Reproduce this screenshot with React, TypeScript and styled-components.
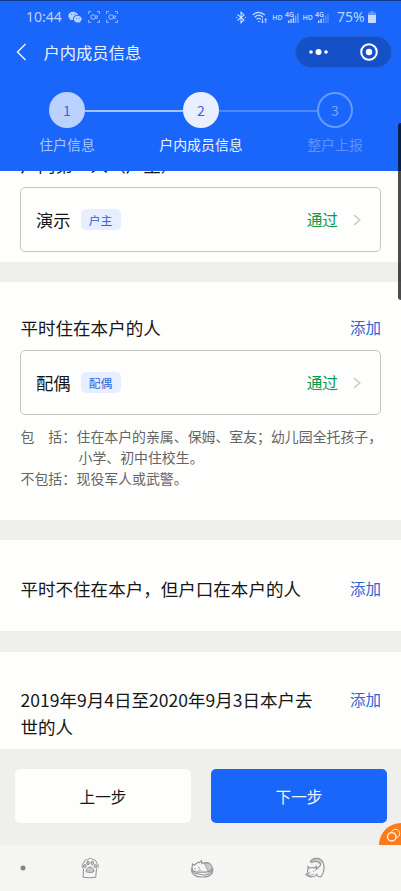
import React from "react";
import styled, { createGlobalStyle, css } from "styled-components";

const Global = createGlobalStyle`
  * { box-sizing: border-box; }
  body {
    margin: 0;
    font-family: "Noto Sans CJK SC", "Noto Sans", sans-serif;
    font-weight: 400;
    color: #161616;
    background: #fefefd;
  }
  button { font: inherit; border: 0; padding: 0; background: none; }
`;

const Screen = styled.div`
  position: relative;
  display: flex;
  flex-direction: column;
  width: 401px;
  height: 891px;
  overflow: hidden;
`;

const Header = styled.header`
  height: 171px;
  flex: none;
  background: #1b66fa;
  border-top: 1px solid #10388c;
  color: #e9f1ff;
`;

const StatusBar = styled.div`
  display: flex;
  justify-content: space-between;
  align-items: center;
  height: 32px;
  padding: 0 25px 0 26px;
  color: #b9d2ff;
  font-family: "Noto Sans", sans-serif;
`;

const StatusGroup = styled.div`
  display: flex;
  align-items: center;
`;

const StatusIcons = styled(StatusGroup)`
  gap: 6px;
`;

const Clock = styled.span`
  width: 36px;
  font-size: 14px;
  line-height: 20px;
`;

const Battery = styled.span`
  margin-left: 8px;
  width: 31px;
  font-size: 14px;
  line-height: 20px;
`;

const NavBar = styled.div`
  display: flex;
  align-items: center;
  height: 37px;
  padding: 1px 9px 0 15px;
  svg { flex: none; }
`;

const Title = styled.h1`
  flex: 1;
  margin: 0 0 0 15.500px;
  font-size: 16.3px;
  line-height: 24px;
  font-weight: 400;
`;

const Capsule = styled.div`
  display: flex;
  align-items: center;
  justify-content: space-between;
  width: 97px;
  height: 32px;
  padding: 0 13px 0 13px;
  border-radius: 16px;
  border: 1px solid #2460d2;
  background: #1450c8;
`;

const Steps = styled.div`
  display: grid;
  grid-template-columns: repeat(3, 134px);
  width: 402px;
  margin: 22px 0 0 0;
`;

type StepState = "done" | "active" | "todo";

const Step = styled.div<{ $state: StepState }>`
  display: grid;
  grid-template-columns: 1fr 36px 1fr;
  align-items: center;
  justify-items: center;
  color: ${(p) => (p.$state === "done" ? "#a6c6ff" : p.$state === "active" ? "#f0f5ff" : "#5b92fd")};
`;

const Link = styled.span<{ $tone: "none" | "strong" | "soft" }>`
  width: 100%;
  height: 2px;
  margin-top: 1px;
  background: ${(p) => (p.$tone === "none" ? "transparent" : p.$tone === "strong" ? "#a3c3ff" : "#4c87fc")};
`;

const Circle = styled.span<{ $state: StepState }>`
  display: flex;
  align-items: center;
  justify-content: center;
  width: 36px;
  height: 36px;
  border-radius: 50%;
  font-size: 14px;
  line-height: 20px;
  color: #2f68dc;
  ${(p) => p.$state === "done" && css`background: #bcd2fe;`}
  ${(p) => p.$state === "active" && css`background: #e8f0ff;`}
  ${(p) => p.$state === "todo" && css`border: 2px solid #659afe; color: #78a7fe;`}
`;

const StepLabel = styled.span`
  grid-column: 1 / -1;
  margin-top: 6px;
  font-size: 13.9px;
  line-height: 20px;
`;

const Content = styled.main`
  flex: 1;
  min-height: 0;
  overflow: hidden;
  background: #efefee;
`;

const Section = styled.section<{ $height: number; $top?: number; $pad?: number }>`
  height: ${(p) => p.$height}px;
  margin-top: ${(p) => p.$top ?? 20}px;
  padding: ${(p) => p.$pad ?? 32}px 20px 0 20.500px;
  background: #fefefd;
`;

const SectionHead = styled.div`
  display: flex;
  justify-content: space-between;
  align-items: flex-start;
  min-height: 27px;
`;

const Heading = styled.h2`
  width: 300px;
  margin: 0;
  font-size: 17.550px;
  line-height: 27px;
  font-weight: 400;
`;

const AddLink = styled.button`
  color: #2a66d4;
  font-size: 15.5px;
  line-height: 26px;
`;

const MemberCard = styled.div`
  display: flex;
  align-items: center;
  width: 361px;
  height: 65px;
  margin: 9px 0 0 -0.500px;
  padding: 1px 19px 0 15px;
  border: 1px solid #c6c6c6;
  border-radius: 5px;
`;

const Name = styled.span`
  font-size: 17.3px;
  line-height: 26px;
`;

const Role = styled.span`
  margin: -2px 0 0 10px;
  width: 40px;
  height: 21px;
  border-radius: 5px;
  text-align: center;
  background: #e7eeff;
  color: #2a66dc;
  font-size: 11.8px;
  line-height: 22px;
`;

const Passed = styled.span`
  margin: 0 15px 0 auto;
  color: #0c9a4c;
  font-size: 15.7px;
  line-height: 24px;
`;

const Hints = styled.dl`
  display: grid;
  grid-template-columns: 56px 1fr;
  margin: 11px -10px 0 0;
  color: #656565;
  font-size: 13.9px;
  line-height: 21px;
`;

const HintTerm = styled.dt`
  white-space: pre;
`;

const HintText = styled.dd`
  margin: 0;
  white-space: nowrap;
`;

const HintRest = styled.div`
  padding-left: 2px;
`;

const Footer = styled.footer`
  display: flex;
  gap: 20px;
  flex: none;
  height: 96px;
  padding: 20px 14px 0 15px;
  background: #efefee;
`;

const StepButton = styled.button<{ $primary?: boolean }>`
  flex: 1;
  height: 54px;
  border-radius: 5px;
  font-size: 15.6px;
  line-height: 24px;
  background: ${(p) => (p.$primary ? "#1b66fa" : "#fefefd")};
  color: ${(p) => (p.$primary ? "#f2f7ff" : "#161616")};
`;

const SystemNav = styled.nav`
  display: flex;
  align-items: center;
  flex: none;
  height: 46px;
  padding: 0 76px 0 20px;
  background: #f5f5f4;
`;

const NavIcons = styled.div`
  display: flex;
  flex: 1;
  justify-content: space-between;
  margin-left: 55px;
`;

const EdgeHandle = styled.div`
  position: absolute;
  top: 123px;
  right: 0;
  width: 3px;
  height: 177px;
  border-radius: 3px 0 0 3px;
  background: rgba(0, 0, 0, 0.7);
`;

const FloatingBubble = styled.div`
  position: absolute;
  top: 822px;
  right: 0;
  width: 22px;
  height: 23px;
  overflow: hidden;
  svg { display: block; }
`;

const WeChat = () => (
  <svg width="14" height="13" viewBox="0 0 14 13" fill="#b9d2ff">
    <path d="M5.4.7C2.4.7.3 2.5.3 4.8c0 1.3.7 2.4 1.8 3.2l-.4 1.6 1.8-.9 1.4.3C4.600 5.900 6.600 4 10 4 9.500 2 7.600.7 5.400.7Z" />
    <path d="M13.700 8.100c0-1.900-1.800-3.400-4-3.400s-4 1.500-4 3.400 1.800 3.400 4 3.400l1.200-.2 1.500.8-.4-1.300c1-.6 1.700-1.600 1.700-2.700Z" />
    <g fill="#1b66fa"><circle cx="3.700" cy="3.500" r=".6" /><circle cx="7" cy="3.500" r=".6" /><circle cx="8.400" cy="7.300" r=".5" /><circle cx="11" cy="7.300" r=".5" /></g>
  </svg>
);

const Capture = () => (
  <svg width="12" height="12" viewBox="0 0 12 12" fill="none" stroke="#a6c5ff" strokeWidth=".9">
    <path d="M.6 3V.6H3M9 .6h2.400V3M11.400 9v2.400H9M3 11.400H.6V9" />
    <rect x="3" y="4" width="4.200" height="4" rx=".8" />
    <path d="m7.200 5.600 2-1v3l-2-1" />
  </svg>
);

const Bluetooth = () => (
  <svg width="12" height="13" viewBox="0 0 12 13" fill="none" stroke="#c6daff" strokeWidth="1.100">
    <path d="m2.500 3.500 6.500 5.500-3 2.700V1.200l3 2.700L2.500 9.500M1 6.500h1.200M9.800 6.500H11" />
  </svg>
);

const Wifi = () => (
  <svg width="16" height="13" viewBox="0 0 16 13" fill="none" stroke="#c6daff" strokeWidth="1.200">
    <path d="M.8 4C4.300.4 9.200.4 12.800 4M2.700 6.200c2.600-2.500 5.600-2.500 8.200 0M4.600 8.400c1.500-1.400 3-1.400 4.400 0" />
    <circle cx="6.800" cy="10.500" r=".8" fill="#c6daff" stroke="none" />
    <path d="M10.500 7.500v4.300m-1.300-1.300 1.300 1.400 1.300-1.400M13.700 12V7.700m-1.300 1.400 1.300-1.400L15 9.100" strokeWidth=".9" />
  </svg>
);

const SignalBox = styled.span`
  display: flex;
  align-items: center;
  gap: 2px;
  font-size: 7px;
  font-weight: 600;
  margin-left: 4px;
`;

const Signal = ({ weak }: { weak?: boolean }) => (
  <SignalBox>
    HD
    <svg width="14" height="13" viewBox="0 0 14 13" fill="#c6daff">
      <text x="0" y="6" fontSize="7" fontWeight="600" fontFamily="Noto Sans">4G</text>
      <path d="M3 9.500h1.400V12H3ZM5.400 8h1.400v4H5.400Z" />
      <path d="M7.800 6.500h1.400V12H7.800Z" opacity={weak ? 0.5 : 1} />
      <path d="M10 4.500h1.400V12H10ZM12.300 2.500h1.400V12h-1.400Z" opacity={weak ? 0.3 : 0.55} />
    </svg>
  </SignalBox>
);

const BatteryIcon = () => (
  <svg width="8" height="12" viewBox="0 0 8 12">
    <path d="M2.500 0h3v1.500H8V12H0V1.500h2.500Z" fill="#6597fb" />
    <path d="M0 4h8v7q0 1-1 1H1q-1 0-1-1Z" fill="#c6daff" />
  </svg>
);

const Chevron = () => (
  <svg width="8" height="12" viewBox="0 0 8 12" fill="none" stroke="#c8c8c8" strokeWidth="1.500">
    <path d="m1 1 5.700 5L1 11" />
  </svg>
);

const Paw = () => (
  <svg width="18" height="22" viewBox="0 0 18 22" fill="none" stroke="#929292" strokeWidth="1">
    <path d="M2 20.300 2.500 12C.6 10.500.7 6.500 3 5.800 3 3 5.500 2.200 6.500 3c1-2.200 4.600-2.200 5.500 0 1.500-.8 3.500.3 3.500 3 2.300 1 2.200 4.800 0 6l-.8 8.300Q9 21.300 2 20.300Z" />
    <g fill="#c9c9c9">
      <ellipse cx="3.800" cy="9" rx="1.300" ry="1.600" /><ellipse cx="7" cy="6" rx="1.300" ry="1.700" /><ellipse cx="11.300" cy="6" rx="1.300" ry="1.700" /><ellipse cx="14.400" cy="9" rx="1.300" ry="1.600" />
      <path d="M9 10c-2 0-4 2.500-4 4s2.500 1.400 4 1.400 4 .1 4-1.400-2-4-4-4Z" />
    </g>
  </svg>
);

const SleepingCat = () => (
  <svg width="24" height="22" viewBox="0 0 24 22" fill="none" stroke="#929292" strokeWidth="1.100">
    <path d="M2 11c-2 7 4.500 9.500 11 9 7-.2 11-3.500 9.500-9" />
    <path d="M2 14c3 4 6 2.500 9 3.500 4 1.200 10 0 11-5" />
    <path d="M2 11 2.500 7l2 1.200C6 6 8 6.200 8.500 5l1 .6 2-2 .5 3c4-2.200 8.500-1 10 3 1 3-2 5.500-6 5.500H7.500C4 15 2 14 2 11Z" />
    <path d="m14 6.200 4 7.800q5-1 4-4.500-1.500-4-8-3.300Z" fill="#c9c9c9" strokeWidth=".7" />
    <path d="m4 11.500 2 .8m2-2 2 .6M8 14l2-1.500 1.500 1.500" strokeWidth=".8" />
  </svg>
);

const StretchingCat = () => (
  <svg width="20" height="22" viewBox="0 0 20 22" fill="none" stroke="#929292" strokeWidth="1.100">
    <path d="M5.200 4.500C8 .5 14 .2 17 3.500c3.200 4.500 2.400 11-.3 15.500-2 1.800-5 .2-5-1.500-2 3-7 2.800-9 1.200-1.500-.2-2-.7-1.900-1.600l2.500-.5C2 15 2.500 13 3 12.500L3 9.500l2 1.500c2-.8 3-.6 4 0l2.400-1.700-.3 3.200c1.300-1.500 3.600-2.800 4.600-4.500-1-3.500-5-4.500-9.300-2.500Z" />
    <path d="M5.500 4.600C9 .5 15 1 17 4l-1.500 3C14 3.500 9 3.500 6.500 5.300Z" fill="#c9c9c9" strokeWidth=".6" />
    <path d="m4 15 1.500.5M8 14.500l1.500-.5M2 18h5l2-1" strokeWidth=".8" />
  </svg>
);

type Tone = "none" | "strong" | "soft";

const steps: { label: string; state: StepState; left: Tone; right: Tone }[] = [
  { label: "住户信息", state: "done", left: "none", right: "strong" },
  { label: "户内成员信息", state: "active", left: "strong", right: "soft" },
  { label: "整户上报", state: "todo", left: "soft", right: "none" },
];

const Member = ({ name, role }: { name: string; role: string }) => (
  <MemberCard>
    <Name>{name}</Name>
    <Role>{role}</Role>
    <Passed>通过</Passed>
    <Chevron />
  </MemberCard>
);

const Radios = styled(StatusGroup)`
  gap: 5px;
`;

export default function App() {
  return (
    <Screen>
      <Global />
      <Header>
        <StatusBar>
          <StatusIcons>
            <Clock>10:44</Clock>
            <WeChat />
            <Capture />
            <Capture />
          </StatusIcons>
          <StatusGroup>
            <Radios>
              <Bluetooth />
              <Wifi />
            </Radios>
            <Signal />
            <Signal weak />
            <Battery>75%</Battery>
            <BatteryIcon />
          </StatusGroup>
        </StatusBar>
        <NavBar>
          <svg width="13" height="18" viewBox="0 0 13 18" fill="none" stroke="#e9f1ff" strokeWidth="1.500">
            <path d="M10.500 1 2.500 9l8 8" />
          </svg>
          <Title>户内成员信息</Title>
          <Capsule>
            <svg width="19" height="8" viewBox="0 0 19 8" fill="#fff">
              <circle cx="2" cy="4" r="1.800" /><circle cx="9.500" cy="4" r="3" /><circle cx="17" cy="4" r="1.800" />
            </svg>
            <svg width="18" height="18" viewBox="0 0 18 18" fill="none">
              <circle cx="9" cy="9" r="7.800" stroke="#fff" strokeWidth="2" /><circle cx="9" cy="9" r="3.200" fill="#fff" />
            </svg>
          </Capsule>
        </NavBar>
        <Steps>
          {steps.map((s, i) => (
            <Step key={s.label} $state={s.state}>
              <Link $tone={s.left} />
              <Circle $state={s.state}>{i + 1}</Circle>
              <Link $tone={s.right} />
              <StepLabel>{s.label}</StepLabel>
            </Step>
          ))}
        </Steps>
      </Header>
      <Content>
        <Section $height={143} $top={-52}>
          <SectionHead>
            <Heading>户内第一人（户主）</Heading>
          </SectionHead>
          <Member name="演示" role="户主" />
        </Section>
        <Section $height={238}>
          <SectionHead>
            <Heading>平时住在本户的人</Heading>
            <AddLink>添加</AddLink>
          </SectionHead>
          <Member name="配偶" role="配偶" />
          <Hints>
            <HintTerm>包　括：</HintTerm>
            <HintText>
              住在本户的亲属、保姆、室友；幼儿园全托孩子，
              <HintRest>小学、初中住校生。</HintRest>
            </HintText>
            <HintTerm>不包括：</HintTerm>
            <HintText>现役军人或武警。</HintText>
          </Hints>
        </Section>
        <Section $height={91} $pad={35}>
          <SectionHead>
            <Heading>平时不住在本户，但户口在本户的人</Heading>
            <AddLink>添加</AddLink>
          </SectionHead>
        </Section>
        <Section $height={98} $top={21} $pad={34}>
          <SectionHead>
            <Heading>2019年9月4日至2020年9月3日本户去世的人</Heading>
            <AddLink>添加</AddLink>
          </SectionHead>
        </Section>
      </Content>
      <Footer>
        <StepButton>上一步</StepButton>
        <StepButton $primary>下一步</StepButton>
      </Footer>
      <SystemNav>
        <svg width="6" height="6" viewBox="0 0 6 6"><circle cx="3" cy="3" r="2.500" fill="#858585" /></svg>
        <NavIcons>
          <Paw />
          <SleepingCat />
          <StretchingCat />
        </NavIcons>
      </SystemNav>
      <EdgeHandle />
      <FloatingBubble>
        <svg width="22" height="23" viewBox="0 0 22 23" fill="none">
          <circle cx="22" cy="23" r="22" fill="#ff7a18" />
          <g stroke="#fff3e6" strokeWidth="1.400">
            <circle cx="16.500" cy="11.500" r="4.200" strokeWidth="1" />
            <circle cx="12.800" cy="14.800" r="4.200" fill="#ff7a18" />
          </g>
        </svg>
      </FloatingBubble>
    </Screen>
  );
}
